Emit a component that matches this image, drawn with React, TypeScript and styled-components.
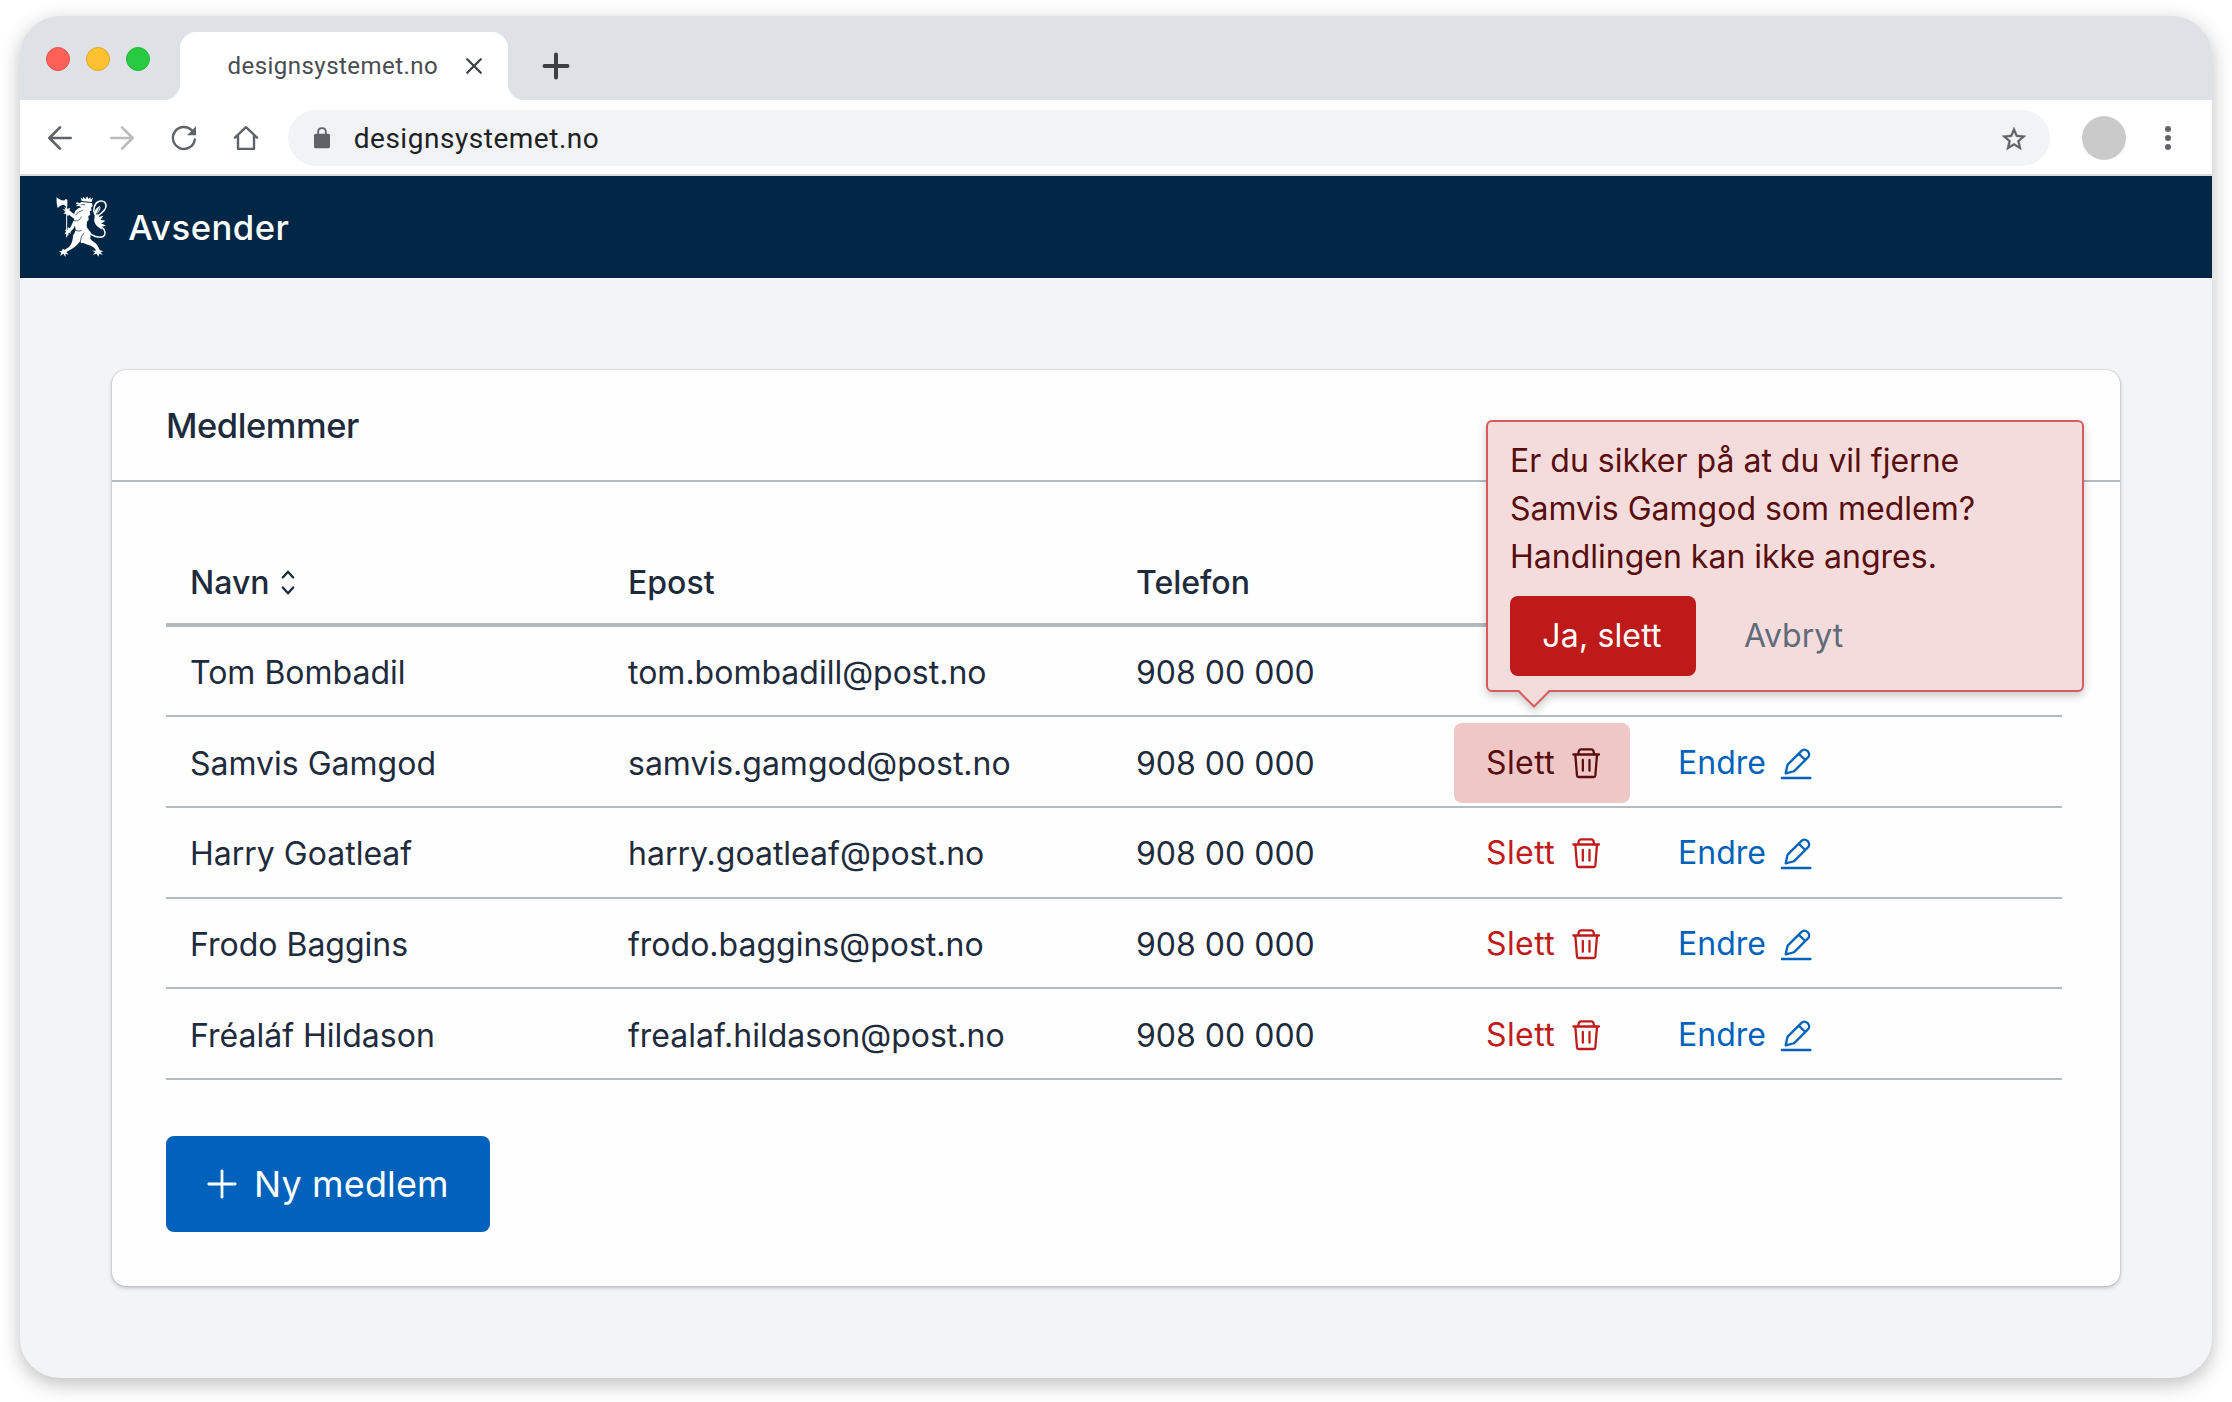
import React from "react";
import styled, { createGlobalStyle, css } from "styled-components";

const GlobalStyle = createGlobalStyle`
  *, *::before, *::after { box-sizing: border-box; }
  body { margin: 0; background: #fff; font-family: Inter, "Liberation Sans", sans-serif; }
  button { font: inherit; border: 0; background: none; margin: 0; padding: 0; }
  svg { display: block; flex: none; overflow: visible; }
`;

const ink = "#1e2b3c";
const line = "#b5babf";

const Page = styled.div`
  height: 1402px;
  padding: 16px 20px 24px;
`;

const Window = styled.div`
  height: 1362px;
  display: flex;
  flex-direction: column;
  border-radius: 40px;
  overflow: hidden;
  background: #f2f4f6;
  box-shadow: 0 6px 20px rgba(0, 0, 0, 0.26);
`;

/* Browser chrome */

const TabStrip = styled.div`
  height: 84px;
  display: flex;
  align-items: flex-end;
  background: #dee1e6;
  padding-left: 26px;
`;

const Lights = styled.div`
  display: flex;
  gap: 16px;
  align-self: center;
  width: 134px;
  margin-bottom: -2px;
`;

const Light = styled.span<{ $fill: string; $edge: string }>`
  width: 24px;
  height: 24px;
  border-radius: 50%;
  background: ${(p) => p.$fill};
  border: 1px solid ${(p) => p.$edge};
`;

const Tab = styled.div`
  position: relative;
  width: 328px;
  height: 68px;
  display: flex;
  align-items: center;
  justify-content: space-between;
  padding: 0 26px 0 47.5px;
  border-radius: 16px 16px 0 0;
  background: #fff;
  color: #494c4f;
  font: 400 24px/32px Roboto, sans-serif;
  letter-spacing: 0.46px;

  &::before,
  &::after {
    content: "";
    position: absolute;
    bottom: 0;
    width: 16px;
    height: 16px;
  }
  &::before {
    right: 100%;
    background: radial-gradient(circle at 0 0, transparent 15.6px, #fff 16.4px);
  }
  &::after {
    left: 100%;
    background: radial-gradient(circle at 100% 0, transparent 15.6px, #fff 16.4px);
  }
`;

const NewTab = styled.button`
  align-self: flex-end;
  height: 68px;
  display: flex;
  align-items: center;
  margin-left: 34px;
  color: #3c4043;
`;

const Toolbar = styled.div`
  height: 76px;
  display: flex;
  align-items: center;
  background: #fff;
  border-bottom: 2px solid #dadcdf;
  padding: 2px 41px 0 28px;
`;

const Nav = styled.div`
  display: flex;
  gap: 38px;
  width: 240px;
`;

const NavButton = styled.button<{ $disabled?: boolean }>`
  color: ${(p) => (p.$disabled ? "#babcbe" : "#5f6368")};
`;

const AddressBar = styled.div`
  flex: 1;
  height: 56px;
  display: flex;
  align-items: center;
  border-radius: 28px;
  background: #f1f3f4;
  padding: 0 24px 0 26px;
  color: #5f6368;
`;

const Url = styled.span`
  flex: 1;
  margin: 2px 0 0 23.7px;
  color: #202124;
  font: 400 28px/36px Roboto, sans-serif;
  letter-spacing: 0.53px;
`;

const Avatar = styled.span`
  width: 44px;
  height: 44px;
  border-radius: 50%;
  background: #cacaca;
  margin: 0 39px 0 32px;
`;

/* Site */

const SiteHeader = styled.header`
  height: 102px;
  display: flex;
  align-items: center;
  gap: 20px;
  padding: 0 0 1px 35px;
  background: #022645;
  color: #fff;
  font-size: 34.67px;
  font-weight: 500;
  letter-spacing: 0.5px;
`;

const Content = styled.main`
  flex: 1;
  padding: 92px;
`;

const Card = styled.section`
  height: 916px;
  border-radius: 14px;
  background: #fefefe;
  box-shadow: 0 0 2px rgba(0, 10, 20, 0.28), 0 2px 4px rgba(0, 10, 20, 0.2);
`;

const CardTitle = styled.h1`
  margin: 0;
  height: 112px;
  padding: 2px 54px 0;
  border-bottom: 2px solid ${line};
  color: ${ink};
  font-size: 34.5px;
  line-height: 108px;
  font-weight: 500;
  letter-spacing: -0.45px;
`;

const Members = styled.div`
  padding: 60px 58px 0 54px;
  color: ${ink};
  font-size: 32px;
`;

const Row = styled.div<{ $head?: boolean }>`
  display: grid;
  grid-template-columns: 438px 508px 318px 1fr;
  align-items: center;
  height: 90.67px;
  padding-top: 2px;
  border-bottom: 2px solid ${line};
  ${(p) =>
    p.$head &&
    css`
      height: 84.67px;
      padding-top: 0;
      border-bottom-width: 4px;
      font-weight: 500;
    `}
`;

const Cell = styled.div`
  display: flex;
  align-items: center;
  gap: 11.5px;
  padding: 2px 0 0 24px;
  line-height: 48px;
  white-space: nowrap;
`;

const Actions = styled(Cell)`
  gap: 16px;
  padding-top: 0;
`;

const Anchor = styled.div`
  position: relative;
`;

const tones = { danger: "#c01b1b", active: "#590d0d", link: "#0062ba" };

const ActionButton = styled.button<{ $tone: keyof typeof tones }>`
  width: ${(p) => (p.$tone === "link" ? "auto" : "176px")};
  height: 80px;
  display: flex;
  align-items: center;
  justify-content: space-between;
  gap: 14px;
  padding: 0 28px 0 32px;
  border-radius: 8px;
  letter-spacing: ${(p) => (p.$tone === "link" ? 0 : 0.4)}px;
  color: ${(p) => tones[p.$tone]};
  background: ${(p) => (p.$tone === "active" ? "#efc7c7" : "transparent")};
`;

const AddButton = styled.button`
  display: flex;
  align-items: center;
  gap: 12px;
  width: 324px;
  height: 96px;
  margin-top: 56px;
  padding-left: 36px;
  border-radius: 8px;
  background: #0062ba;
  color: #fff;
  font-size: 36px;
  letter-spacing: 0.14px;
`;

/* Confirmation popover */

const Popover = styled.div`
  position: absolute;
  z-index: 1;
  left: 32px;
  bottom: calc(100% + 31px);
  width: 598px;
  height: 272px;
  padding: 15px 22px 13px;
  border: 2px solid #d65c5c;
  border-radius: 6px;
  background: #f4dcdc;
  color: #590d0d;
  filter: drop-shadow(0 4px 4px rgba(0, 0, 0, 0.2));
`;

const PopoverText = styled.p`
  margin: 0;
  line-height: 48px;
`;

const PopoverButtons = styled.div`
  display: flex;
  gap: 16px;
  margin-top: 15px;
`;

const PopoverButton = styled.button<{ $primary?: boolean }>`
  height: 80px;
  padding: 0 32px;
  border-radius: 8px;
  ${(p) =>
    p.$primary
      ? css`
          width: 186px;
          padding: 0 2px 0 0;
          background: #bf1a1a;
          color: #fff;
          letter-spacing: 0.15px;
        `
      : css`
          color: #5f6b78;
        `}
`;

const Arrow = styled.svg`
  position: absolute;
  left: 30px;
  top: 268px;
`;

const TrashIcon = () => (
  <svg width="32" height="32" viewBox="420 140 96 96" fill="none" stroke="currentColor" strokeWidth="6.800" strokeLinecap="round" strokeLinejoin="round">
    <path d="M430 162.500H507M444 162L447 151Q448.500 147 453 147H484Q488.500 147 490 151L493 162M436 163L441 226Q441.500 230 446 230H491Q495.500 230 496 226L501 163M458.500 179V211M478.500 179V211" />
  </svg>
);

const PencilIcon = () => (
  <svg width="32" height="32" viewBox="1050 140 96 96" fill="none" stroke="currentColor" strokeWidth="6.800" strokeLinecap="round" strokeLinejoin="round">
    <path d="M1067 219L1072 196Q1072.500 193.500 1074.500 191.500L1113 153C1119 147 1127 147 1133 152.500C1139 158.500 1139 166 1133 172L1094 211Q1092 213 1089.500 213.500ZM1106 160L1126 179" />
    <path d="M1056 233H1141" strokeWidth="7.500" />
  </svg>
);

const SortIcon = () => (
  <svg width="14" height="26" viewBox="0 0 14 26" fill="none" stroke="currentColor" strokeWidth="2.300" strokeLinecap="round" strokeLinejoin="round">
    <path d="M1.800 7.500L7 1.700L12.200 7.500M1.800 17.500L7 23.300L12.200 17.500" />
  </svg>
);

const PlusIcon = () => (
  <svg width="40" height="40" viewBox="0 0 40 40" fill="none" stroke="currentColor" strokeWidth="2.800" strokeLinecap="round">
    <path d="M20 6.800V33.200M6.800 20H33.200" />
  </svg>
);

const LionLogo = () => (
  <svg width="53.330" height="63.330" viewBox="45 45 160 190" fill="#fff">
    {/* axe */}
    <path d="M50 51C56 58 65 62 74 61L77 57L82 59L82 77L76 79L72 74C65 74 58 78 53 84C50 73 49 62 50 51Z" />
    <path d="M78.500 76H81.500V172H78.500Z" />
    {/* crown */}
    <path d="M122 52L127 57L131 50L136 58L141 49L146 57L151 51L152 58L159 53L155 66L125 63Z" />
    {/* head, mane and torso */}
    <path d="M124 66L156 69L158 79L153 83L155 91L149 94L151 104L145 108L146 120L141 125L140 138C141 145 147 151 152 157L151 178L143 187L124 190L116 182L99 190L100 168L107 150L104 133L102 117L102 103L106 92L116 84L124 82L118 78L109 79L110 75L117 74L108 71L110 67L119 69Z" />
    {/* raised arm */}
    <path d="M68 87L76 89L73 80L82 87L91 83L88 91L98 99L106 104L103 117L87 104L84 109L79 101L70 102L76 95Z" />
    {/* lower arm */}
    <path d="M102 120L110 126L101 145L92 155L91 162L87 157L84 169L80 161L74 163L78 154L74 149L82 150L84 142L90 145Z" />
    {/* hind legs */}
    <path d="M100 163L122 180C116 193 102 204 91 209L79 216L86 224L77 221L76 231L70 221L60 228L64 218L56 213L66 213L68 206L74 209L86 202C97 192 98 178 100 163Z" />
    <path d="M124 178L151 177C159 186 171 190 173 198L180 211L190 214L182 217L188 225L178 221L175 230L170 221L158 224L166 217L156 212L168 212C164 201 151 196 139 193C130 191 125 186 124 178Z" />
    {/* tail */}
    <g fill="none" stroke="#fff" strokeLinecap="round">
      <path d="M138 147C148 160 158 171 180 172C195 171 199 160 192 148C184 138 167 134 165 119" strokeWidth="4.500" />
      <path d="M164 102C158 89 163 69 178 64C192 60 201 70 197 83C193 97 179 99 172 111" strokeWidth="4.500" />
    </g>
    <path d="M164 107C160 96 168 83 179 78C185 83 178 96 170 103C175 103 178 105 176 111L190 107C187 113 183 117 181 119L196 122C191 127 185 129 182 129L198 137C190 140 184 140 180 137L188 149C175 144 163 134 163 120Z" />
    {/* contour lines inside the figure */}
    <g fill="none" stroke="#022645" strokeWidth="2.200" strokeLinecap="round">
      <path d="M125 74H134M107 105C113 95 121 95 127 91M103 122C112 125 119 120 124 111M106 150C112 154 119 154 124 151M121 188C122 174 125 166 132 159M169 103C173 95 177 89 178 83" />
    </g>
  </svg>
);

const members = [
  { name: "Tom Bombadil", email: "tom.bombadill@post.no" },
  { name: "Samvis Gamgod", email: "samvis.gamgod@post.no", confirming: true },
  { name: "Harry Goatleaf", email: "harry.goatleaf@post.no" },
  { name: "Frodo Baggins", email: "frodo.baggins@post.no" },
  { name: "Fréaláf Hildason", email: "frealaf.hildason@post.no" },
];

const ConfirmPopover = () => (
  <Popover>
    <PopoverText>
      Er du sikker på at du vil fjerne
      <br />
      Samvis Gamgod som medlem?
      <br />
      Handlingen kan ikke angres.
    </PopoverText>
    <PopoverButtons>
      <PopoverButton $primary>Ja, slett</PopoverButton>
      <PopoverButton>Avbryt</PopoverButton>
    </PopoverButtons>
    <Arrow width="32" height="20" viewBox="0 0 32 20">
      <path d="M1 0L16 16L31 0Z" fill="#f4dcdc" />
      <path d="M0.500 1L16 16.500L31.500 1" fill="none" stroke="#d65c5c" strokeWidth="2" />
    </Arrow>
  </Popover>
);

export default function App() {
  return (
    <>
      <GlobalStyle />
      <Page>
        <Window>
          <TabStrip>
            <Lights>
              <Light $fill="#ff6058" $edge="#e9514a" />
              <Light $fill="#ffc130" $edge="#e0a52a" />
              <Light $fill="#27ca40" $edge="#22b838" />
            </Lights>
            <Tab>
              designsystemet.no
              <svg width="16" height="16" viewBox="0 0 16 16" stroke="#3c4043" strokeWidth="2.200" strokeLinecap="round">
                <path d="M1.200 1.200L14.800 14.800M14.800 1.200L1.200 14.800" />
              </svg>
            </Tab>
            <NewTab>
              <svg width="28" height="28" viewBox="0 0 28 28" stroke="currentColor" strokeWidth="4" strokeLinecap="round">
                <path d="M14 2.500V25.500M2.500 14H25.500" />
              </svg>
            </NewTab>
          </TabStrip>
          <Toolbar>
            <Nav>
              <NavButton>
                <svg width="24" height="24" viewBox="24 41 72 72" fill="none" stroke="currentColor" strokeWidth="8" strokeLinecap="round" strokeLinejoin="round">
                  <path d="M28 77H92M60 45L28 77L60 109" />
                </svg>
              </NavButton>
              <NavButton $disabled>
                <svg width="24" height="24" viewBox="210 41 72 72" fill="none" stroke="currentColor" strokeWidth="8" strokeLinecap="round" strokeLinejoin="round">
                  <path d="M278 77H214M246 45L278 77L246 109" />
                </svg>
              </NavButton>
              <NavButton>
                <svg width="24" height="24" viewBox="396 42 72 72" fill="none" stroke="currentColor" strokeWidth="7.200" strokeLinecap="round">
                  <path d="M464.500 82A33 33 0 1 1 455.300 54.700" />
                  <path d="M468 43V70H441Z" fill="currentColor" stroke="none" />
                </svg>
              </NavButton>
              <NavButton>
                <svg width="24" height="24" viewBox="582 42 72 72" fill="none" stroke="currentColor" strokeWidth="7.200" strokeLinecap="round" strokeLinejoin="round">
                  <path d="M585 77L618 45.500L651 77M594 71V110.500H642V71" />
                </svg>
              </NavButton>
            </Nav>
            <AddressBar>
              <svg width="16" height="22" viewBox="822 44 48 66">
                <rect x="822" y="64" width="48" height="44" rx="5" fill="currentColor" />
                <path d="M834.500 66V58C834.500 43.500 857.500 43.500 857.500 58V66" fill="none" stroke="currentColor" strokeWidth="5.500" />
              </svg>
              <Url>designsystemet.no</Url>
              <svg width="24" height="23" viewBox="2 2 20 19" fill="currentColor" stroke="currentColor" strokeWidth="0.300">
                <path d="M22 9.240l-7.190-.620L12 2 9.190 8.630 2 9.240l5.460 4.730L5.820 21 12 17.270 18.180 21l-1.630-7.030L22 9.240zM12 15.400l-3.760 2.270 1-4.280-3.320-2.880 4.380-.380L12 6.100l1.710 4.040 4.380.380-3.320 2.880 1 4.280L12 15.400z" />
              </svg>
            </AddressBar>
            <Avatar />
            <svg width="6" height="24" viewBox="0 0 6 24" fill="#5f6368">
              <circle cx="3" cy="3" r="3" />
              <circle cx="3" cy="12" r="3" />
              <circle cx="3" cy="21" r="3" />
            </svg>
          </Toolbar>
          <SiteHeader>
            <LionLogo />
            Avsender
          </SiteHeader>
          <Content>
            <Card>
              <CardTitle>Medlemmer</CardTitle>
              <Members>
                <Row $head>
                  <Cell>
                    Navn
                    <SortIcon />
                  </Cell>
                  <Cell>Epost</Cell>
                  <Cell>Telefon</Cell>
                  <Cell />
                </Row>
                {members.map((m) => (
                  <Row key={m.name}>
                    <Cell>{m.name}</Cell>
                    <Cell>{m.email}</Cell>
                    <Cell>908 00 000</Cell>
                    <Actions>
                      <Anchor>
                        <ActionButton $tone={m.confirming ? "active" : "danger"}>
                          Slett
                          <TrashIcon />
                        </ActionButton>
                        {m.confirming && <ConfirmPopover />}
                      </Anchor>
                      <ActionButton $tone="link">
                        Endre
                        <PencilIcon />
                      </ActionButton>
                    </Actions>
                  </Row>
                ))}
                <AddButton>
                  <PlusIcon />
                  Ny medlem
                </AddButton>
              </Members>
            </Card>
          </Content>
        </Window>
      </Page>
    </>
  );
}
